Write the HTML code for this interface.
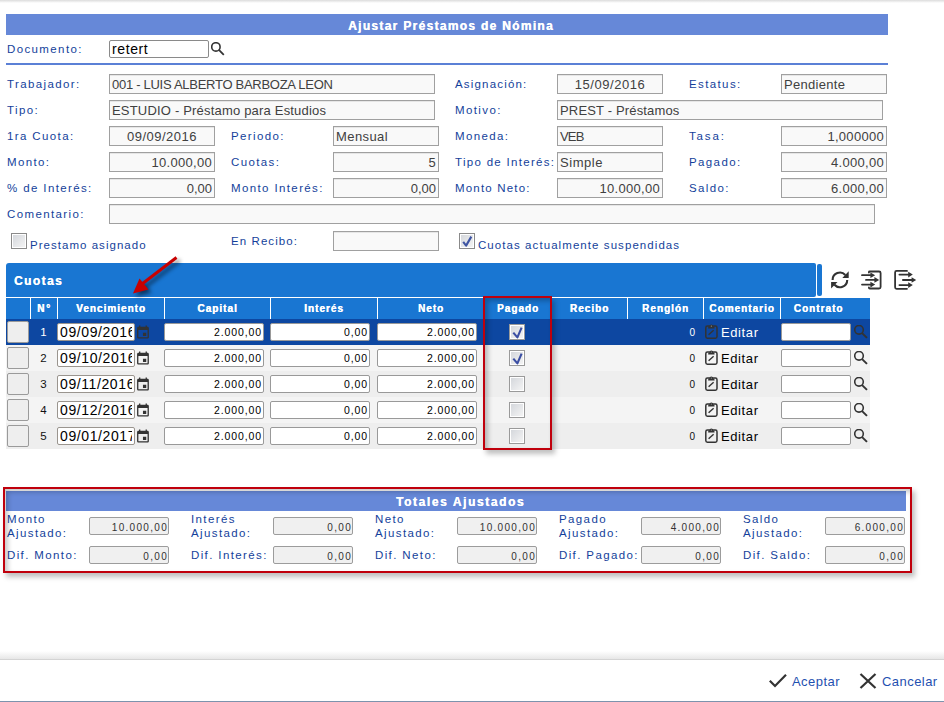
<!DOCTYPE html>
<html><head><meta charset="utf-8">
<style>
*{box-sizing:border-box;margin:0;padding:0}
html,body{width:944px;height:702px;overflow:hidden;background:#fff;font-family:"Liberation Sans",sans-serif}
.a{position:absolute}
.topsh{left:0;top:0;width:944px;height:3px;background:linear-gradient(#dcdcdc,#fff)}
.hbar{background:#6688d8;color:#fff;font-weight:bold;font-size:12px;text-align:center;letter-spacing:1.3px;padding-left:8px;text-shadow:0.3px 0 0 #fff}
.lbl{color:#143f9b;font-size:11.5px;letter-spacing:1.38px;white-space:nowrap;line-height:14px;margin-top:-1px}
.inp{height:20px;border:1px solid #a0a0a0;background:#f9f9f9;color:#404040;font-size:13px;line-height:19px;padding:0 2px;letter-spacing:0.3px;white-space:nowrap;overflow:hidden;box-shadow:inset 0 1px 0 #e6e6e6}
.r{text-align:right}
.c{text-align:center}
.th{height:21px;line-height:21px;color:#fff;font-weight:bold;font-size:10px;letter-spacing:1px;text-align:center;white-space:nowrap;text-shadow:0.35px 0 0 #fff}
.rsel{width:22px;height:22px;border:1px solid #9a9a9a;border-radius:2px;background:#eee}
.num{font-size:11.5px;line-height:12px;text-align:center}
.rg{font-size:10px;line-height:12px;text-align:right}
.dinp{width:78px;height:18px;border:1px solid #9a958f;border-radius:2px;background:#fff;color:#000;font-size:14px;line-height:16px;padding-left:2px;white-space:nowrap;overflow:hidden;letter-spacing:0.6px}
.dinp span{display:block;width:72px;overflow:hidden}
.tinp{height:18px;border:1px solid #999;border-radius:2px;background:#fff;color:#000;font-size:10.5px;line-height:17px;padding-right:1px;text-align:right;letter-spacing:0.9px;white-space:nowrap}
.chk{width:16px;height:16px;border:1px solid #9a9a9a;background:linear-gradient(135deg,#d2d5da,#f6f6f6);box-shadow:inset 0 0 0 1px #fff;padding:0}
.chk svg{position:absolute;left:0;top:0}
.edt{font-size:13px;line-height:16px;letter-spacing:0.6px}
.cinp{width:70px;height:18px;border:1px solid #999;border-radius:2px;background:#fff}
.redbox{border:2px solid #c0000c;z-index:5;box-shadow:3px 4px 5px rgba(0,0,0,.25), inset 3px 3px 5px rgba(0,0,0,.25)}
.redbox2{border:2px solid #c0000c;z-index:5;box-shadow:3px 4px 5px rgba(0,0,0,.25), inset 3px 3px 5px rgba(0,0,0,.22)}
.ginp{width:80px;height:18px;border:1px solid #9c9c9c;border-radius:2px;background:#f0f0f0;color:#333;font-size:10px;line-height:18px;text-align:right;padding:1px 0 0 0;letter-spacing:1.3px;white-space:nowrap}
.cb{width:16px;height:16px;border:1px solid #8a8a8a;background:linear-gradient(135deg,#d2d5da,#f6f6f6);box-shadow:inset 0 0 0 1px #fff}
.btn{color:#1f50b0;font-size:13px;line-height:16px;white-space:nowrap;letter-spacing:0.45px}
</style></head><body>
<div class="a topsh"></div>
<div class="a hbar" style="left:6px;top:14px;width:882px;height:21px;line-height:24px">Ajustar Préstamos de Nómina</div>

<div class="a lbl" style="left:7px;top:43px">Documento:</div>
<div class="a" style="left:109px;top:40px;width:100px;height:18px;border:1px solid #8a8a8a;border-radius:2px;background:#fff;font-size:14px;line-height:16px;padding-left:2px;color:#000;letter-spacing:0.6px">retert</div>
<svg class="a" style="left:211px;top:42px" width="15" height="15" viewBox="0 0 15 15"><circle cx="4.9" cy="4.9" r="4.2" fill="none" stroke="#333" stroke-width="1.6"/><path d="M7.9 7.9 L12.8 12.8" stroke="#333" stroke-width="1.8"/></svg>
<div class="a" style="left:6px;top:63px;width:882px;height:2px;background:#5b80d6"></div>

<!-- row 1 -->
<div class="a lbl" style="left:7px;top:78px">Trabajador:</div>
<div class="a inp" style="left:109px;top:74px;width:326px;letter-spacing:-0.28px">001 - LUIS ALBERTO BARBOZA LEON</div>
<div class="a lbl" style="left:455px;top:78px;letter-spacing:1.18px">Asignación:</div>
<div class="a inp c" style="left:557px;top:74px;width:106px;letter-spacing:0.55px">15/09/2016</div>
<div class="a lbl" style="left:689px;top:78px">Estatus:</div>
<div class="a inp" style="left:781px;top:74px;width:106px">Pendiente</div>
<!-- row 2 -->
<div class="a lbl" style="left:7px;top:104px">Tipo:</div>
<div class="a inp" style="left:109px;top:100px;width:326px;letter-spacing:0.19px">ESTUDIO - Préstamo para Estudios</div>
<div class="a lbl" style="left:455px;top:104px">Motivo:</div>
<div class="a inp" style="left:557px;top:100px;width:326px;letter-spacing:0.16px">PREST - Préstamos</div>
<!-- row 3 -->
<div class="a lbl" style="left:7px;top:130px">1ra Cuota:</div>
<div class="a inp c" style="left:109px;top:126px;width:106px;letter-spacing:0.5px">09/09/2016</div>
<div class="a lbl" style="left:231px;top:130px">Periodo:</div>
<div class="a inp" style="left:333px;top:126px;width:106px;letter-spacing:0.42px">Mensual</div>
<div class="a lbl" style="left:455px;top:130px">Moneda:</div>
<div class="a inp" style="left:557px;top:126px;width:106px;letter-spacing:-0.8px">VEB</div>
<div class="a lbl" style="left:689px;top:130px;letter-spacing:1.85px">Tasa:</div>
<div class="a inp r" style="left:781px;top:126px;width:106px">1,000000</div>
<!-- row 4 -->
<div class="a lbl" style="left:7px;top:156px">Monto:</div>
<div class="a inp r" style="left:109px;top:152px;width:106px">10.000,00</div>
<div class="a lbl" style="left:231px;top:156px">Cuotas:</div>
<div class="a inp r" style="left:333px;top:152px;width:106px">5</div>
<div class="a lbl" style="left:455px;top:156px;letter-spacing:1.3px">Tipo de Interés:</div>
<div class="a inp" style="left:557px;top:152px;width:106px;letter-spacing:0.54px">Simple</div>
<div class="a lbl" style="left:689px;top:156px">Pagado:</div>
<div class="a inp r" style="left:781px;top:152px;width:106px">4.000,00</div>
<!-- row 5 -->
<div class="a lbl" style="left:7px;top:182px">% de Interés:</div>
<div class="a inp r" style="left:109px;top:178px;width:106px;letter-spacing:0px">0,00</div>
<div class="a lbl" style="left:231px;top:182px">Monto Interés:</div>
<div class="a inp r" style="left:333px;top:178px;width:106px;letter-spacing:0px">0,00</div>
<div class="a lbl" style="left:455px;top:182px;letter-spacing:1.18px">Monto Neto:</div>
<div class="a inp r" style="left:557px;top:178px;width:106px">10.000,00</div>
<div class="a lbl" style="left:689px;top:182px">Saldo:</div>
<div class="a inp r" style="left:781px;top:178px;width:106px">6.000,00</div>
<!-- row 6 -->
<div class="a lbl" style="left:7px;top:208px">Comentario:</div>
<div class="a inp" style="left:109px;top:204px;width:766px"></div>
<!-- row 7 -->
<div class="a cb" style="left:11px;top:233px"></div>
<div class="a lbl" style="left:30px;top:239px;letter-spacing:1.03px">Prestamo asignado</div>
<div class="a lbl" style="left:231px;top:235px;letter-spacing:1.08px">En Recibo:</div>
<div class="a inp" style="left:333px;top:231px;width:106px"></div>
<div class="a cb" style="left:459px;top:233px"><svg width="14" height="14" viewBox="0 0 14 14" style="position:absolute;left:0;top:0"><path d="M3.2 7.9 L6.1 11.6 L11.3 2.6" fill="none" stroke="#3f55a3" stroke-width="2.1" stroke-linejoin="round"/></svg></div>
<div class="a lbl" style="left:478px;top:239px;letter-spacing:1.07px">Cuotas actualmente suspendidas</div>

<svg width="0" height="0" style="position:absolute"><defs>
<g id="cal"><path d="M1 3 Q1 2 2 2 H10 Q11 2 11 3 V12 Q11 13 10 13 H2 Q1 13 1 12 Z" fill="none" stroke="#333" stroke-width="1.6"/><rect x="1" y="2" width="10" height="3" fill="#333"/><rect x="3" y="0.5" width="1.5" height="2.5" fill="#333"/><rect x="7.5" y="0.5" width="1.5" height="2.5" fill="#333"/><rect x="6.5" y="8" width="3" height="3" fill="#333"/></g>
<g id="clip"><rect x="0.8" y="2.1" width="11.2" height="12.1" rx="1.6" fill="none" stroke="#333" stroke-width="1.5"/><path d="M3.1 4.4 L3.4 2.4 H4.5 A1.85 1.85 0 0 1 8.2 2.4 H9.3 L9.6 4.4 Z" fill="#333"/><circle cx="6.35" cy="2.1" r="0.6" fill="#9a9a9a"/><path d="M3.6 10.8 L8.6 6.2" stroke="#333" stroke-width="1.4"/></g>
<g id="srch"><circle cx="5" cy="4.8" r="4.3" fill="none" stroke="#333" stroke-width="1.6"/><path d="M8.1 8.1 L13 12.9" stroke="#333" stroke-width="2"/></g>
</defs></svg>
<!-- cuotas -->
<div class="a" style="left:6px;top:263px;width:810px;height:34px;background:#1976d2;border-radius:3px 2px 2px 0"></div>
<div class="a" style="left:14px;top:274px;color:#fff;font-weight:bold;font-size:12px;letter-spacing:1.4px;line-height:14px;text-shadow:0.3px 0 0 #fff">Cuotas</div>
<div class="a" style="left:817px;top:264px;width:5px;height:32px;background:#1976d2;border-radius:2px"></div>
<div class="a" style="left:6px;top:298px;width:864px;height:21px;background:#1976d2"></div>
<div class="a" style="left:30px;top:298px;width:1px;height:21px;background:#fff"></div>
<div class="a" style="left:57px;top:298px;width:1px;height:21px;background:#fff"></div>
<div class="a" style="left:164px;top:298px;width:1px;height:21px;background:#fff"></div>
<div class="a" style="left:270px;top:298px;width:1px;height:21px;background:#fff"></div>
<div class="a" style="left:377px;top:298px;width:1px;height:21px;background:#fff"></div>
<div class="a" style="left:484px;top:298px;width:1px;height:21px;background:#fff"></div>
<div class="a" style="left:551px;top:298px;width:1px;height:21px;background:#fff"></div>
<div class="a" style="left:627px;top:298px;width:1px;height:21px;background:#fff"></div>
<div class="a" style="left:703px;top:298px;width:1px;height:21px;background:#fff"></div>
<div class="a" style="left:780px;top:298px;width:1px;height:21px;background:#fff"></div>
<div class="a th" style="left:31px;top:298px;width:26px;letter-spacing:1.8px;padding-left:1px">N°</div>
<div class="a th" style="left:58px;top:298px;width:106px">Vencimiento</div>
<div class="a th" style="left:165px;top:298px;width:105px">Capital</div>
<div class="a th" style="left:271px;top:298px;width:106px">Interés</div>
<div class="a th" style="left:378px;top:298px;width:106px">Neto</div>
<div class="a th" style="left:485px;top:298px;width:66px">Pagado</div>
<div class="a th" style="left:552px;top:298px;width:75px">Recibo</div>
<div class="a th" style="left:628px;top:298px;width:75px">Renglón</div>
<div class="a th" style="left:704px;top:298px;width:76px">Comentario</div>
<div class="a th" style="left:781px;top:298px;width:75px">Contrato</div>
<div class="a" style="left:6px;top:319px;width:864px;height:26px;background:#0d47a1"></div>
<div class="a rsel" style="left:7px;top:321px"></div>
<div class="a num" style="left:30px;top:326px;width:27px;color:#fff">1</div>
<div class="a dinp" style="left:57px;top:323px"><span>09/09/2016</span></div>
<svg class="a" style="left:135px;top:324px" width="16" height="16" viewBox="-0.15 -1.3 24.4 24.4"><path d="M17 12h-5v5h5v-5zM16 1v2H8V1H6v2H5c-1.11 0-1.99.9-1.99 2L3 19a2 2 0 0 0 2 2h14c1.1 0 2-.9 2-2V5c0-1.1-.9-2-2-2h-1V1h-2zm3 18H5V8h14v11z" fill="#333"/></svg>
<div class="a tinp" style="left:164px;top:323px;width:100px">2.000,00</div>
<div class="a tinp" style="left:270px;top:323px;width:100px">0,00</div>
<div class="a tinp" style="left:377px;top:323px;width:100px">2.000,00</div>
<div class="a chk" style="left:509px;top:324px"><svg width="14" height="14" viewBox="0 0 14 14"><path d="M3.3 7.6 L7.4 12.4 L11.6 2.6" fill="none" stroke="#3b4ea3" stroke-width="2.1" stroke-linejoin="round"/></svg></div>
<div class="a rg" style="left:660px;top:327px;width:35px;color:#fff">0</div>
<svg class="a" style="left:705px;top:324px" width="13" height="15" viewBox="0 0 13 15"><use href="#clip"/></svg>
<div class="a edt" style="left:721px;top:325px;color:#fff">Editar</div>
<div class="a cinp" style="left:781px;top:323px"></div>
<svg class="a" style="left:854px;top:325px" width="14" height="14" viewBox="0 0 14 14"><use href="#srch"/></svg>
<div class="a" style="left:6px;top:345px;width:864px;height:26px;background:#f4f4f4"></div>
<div class="a rsel" style="left:7px;top:347px"></div>
<div class="a num" style="left:30px;top:352px;width:27px;color:#111">2</div>
<div class="a dinp" style="left:57px;top:349px"><span>09/10/2016</span></div>
<svg class="a" style="left:135px;top:350px" width="16" height="16" viewBox="-0.15 -1.3 24.4 24.4"><path d="M17 12h-5v5h5v-5zM16 1v2H8V1H6v2H5c-1.11 0-1.99.9-1.99 2L3 19a2 2 0 0 0 2 2h14c1.1 0 2-.9 2-2V5c0-1.1-.9-2-2-2h-1V1h-2zm3 18H5V8h14v11z" fill="#333"/></svg>
<div class="a tinp" style="left:164px;top:349px;width:100px">2.000,00</div>
<div class="a tinp" style="left:270px;top:349px;width:100px">0,00</div>
<div class="a tinp" style="left:377px;top:349px;width:100px">2.000,00</div>
<div class="a chk" style="left:509px;top:350px"><svg width="14" height="14" viewBox="0 0 14 14"><path d="M3.3 7.6 L7.4 12.4 L11.6 2.6" fill="none" stroke="#3b4ea3" stroke-width="2.1" stroke-linejoin="round"/></svg></div>
<div class="a rg" style="left:660px;top:353px;width:35px;color:#111">0</div>
<svg class="a" style="left:705px;top:350px" width="13" height="15" viewBox="0 0 13 15"><use href="#clip"/></svg>
<div class="a edt" style="left:721px;top:351px;color:#000">Editar</div>
<div class="a cinp" style="left:781px;top:349px"></div>
<svg class="a" style="left:854px;top:351px" width="14" height="14" viewBox="0 0 14 14"><use href="#srch"/></svg>
<div class="a" style="left:6px;top:371px;width:864px;height:26px;background:#eeeeee"></div>
<div class="a rsel" style="left:7px;top:373px"></div>
<div class="a num" style="left:30px;top:378px;width:27px;color:#111">3</div>
<div class="a dinp" style="left:57px;top:375px"><span>09/11/2016</span></div>
<svg class="a" style="left:135px;top:376px" width="16" height="16" viewBox="-0.15 -1.3 24.4 24.4"><path d="M17 12h-5v5h5v-5zM16 1v2H8V1H6v2H5c-1.11 0-1.99.9-1.99 2L3 19a2 2 0 0 0 2 2h14c1.1 0 2-.9 2-2V5c0-1.1-.9-2-2-2h-1V1h-2zm3 18H5V8h14v11z" fill="#333"/></svg>
<div class="a tinp" style="left:164px;top:375px;width:100px">2.000,00</div>
<div class="a tinp" style="left:270px;top:375px;width:100px">0,00</div>
<div class="a tinp" style="left:377px;top:375px;width:100px">2.000,00</div>
<div class="a chk" style="left:509px;top:376px"></div>
<div class="a rg" style="left:660px;top:379px;width:35px;color:#111">0</div>
<svg class="a" style="left:705px;top:376px" width="13" height="15" viewBox="0 0 13 15"><use href="#clip"/></svg>
<div class="a edt" style="left:721px;top:377px;color:#000">Editar</div>
<div class="a cinp" style="left:781px;top:375px"></div>
<svg class="a" style="left:854px;top:377px" width="14" height="14" viewBox="0 0 14 14"><use href="#srch"/></svg>
<div class="a" style="left:6px;top:397px;width:864px;height:26px;background:#f4f4f4"></div>
<div class="a rsel" style="left:7px;top:399px"></div>
<div class="a num" style="left:30px;top:404px;width:27px;color:#111">4</div>
<div class="a dinp" style="left:57px;top:401px"><span>09/12/2016</span></div>
<svg class="a" style="left:135px;top:402px" width="16" height="16" viewBox="-0.15 -1.3 24.4 24.4"><path d="M17 12h-5v5h5v-5zM16 1v2H8V1H6v2H5c-1.11 0-1.99.9-1.99 2L3 19a2 2 0 0 0 2 2h14c1.1 0 2-.9 2-2V5c0-1.1-.9-2-2-2h-1V1h-2zm3 18H5V8h14v11z" fill="#333"/></svg>
<div class="a tinp" style="left:164px;top:401px;width:100px">2.000,00</div>
<div class="a tinp" style="left:270px;top:401px;width:100px">0,00</div>
<div class="a tinp" style="left:377px;top:401px;width:100px">2.000,00</div>
<div class="a chk" style="left:509px;top:402px"></div>
<div class="a rg" style="left:660px;top:405px;width:35px;color:#111">0</div>
<svg class="a" style="left:705px;top:402px" width="13" height="15" viewBox="0 0 13 15"><use href="#clip"/></svg>
<div class="a edt" style="left:721px;top:403px;color:#000">Editar</div>
<div class="a cinp" style="left:781px;top:401px"></div>
<svg class="a" style="left:854px;top:403px" width="14" height="14" viewBox="0 0 14 14"><use href="#srch"/></svg>
<div class="a" style="left:6px;top:423px;width:864px;height:26px;background:#eeeeee"></div>
<div class="a rsel" style="left:7px;top:425px"></div>
<div class="a num" style="left:30px;top:430px;width:27px;color:#111">5</div>
<div class="a dinp" style="left:57px;top:427px"><span>09/01/2017</span></div>
<svg class="a" style="left:135px;top:428px" width="16" height="16" viewBox="-0.15 -1.3 24.4 24.4"><path d="M17 12h-5v5h5v-5zM16 1v2H8V1H6v2H5c-1.11 0-1.99.9-1.99 2L3 19a2 2 0 0 0 2 2h14c1.1 0 2-.9 2-2V5c0-1.1-.9-2-2-2h-1V1h-2zm3 18H5V8h14v11z" fill="#333"/></svg>
<div class="a tinp" style="left:164px;top:427px;width:100px">2.000,00</div>
<div class="a tinp" style="left:270px;top:427px;width:100px">0,00</div>
<div class="a tinp" style="left:377px;top:427px;width:100px">2.000,00</div>
<div class="a chk" style="left:509px;top:428px"></div>
<div class="a rg" style="left:660px;top:431px;width:35px;color:#111">0</div>
<svg class="a" style="left:705px;top:428px" width="13" height="15" viewBox="0 0 13 15"><use href="#clip"/></svg>
<div class="a edt" style="left:721px;top:429px;color:#000">Editar</div>
<div class="a cinp" style="left:781px;top:427px"></div>
<svg class="a" style="left:854px;top:429px" width="14" height="14" viewBox="0 0 14 14"><use href="#srch"/></svg>
<!-- annotations -->
<div class="a redbox" style="left:483px;top:296px;width:69px;height:154px"></div>
<svg class="a" style="left:120px;top:250px" width="70" height="55" viewBox="120 250 70 55">
<defs><filter id="sh" x="-50%" y="-50%" width="200%" height="200%"><feGaussianBlur stdDeviation="2"/></filter></defs>
<g transform="translate(3,3)" opacity="0.55" filter="url(#sh)"><path d="M176.5 257.5 L142 284" stroke="#000" stroke-width="3"/><path d="M133 293.5 L139.5 278.5 L148.5 289.5 Z" fill="#000"/></g>
<path d="M176.5 257.5 L142 284" stroke="#c80000" stroke-width="3"/><path d="M133 293.5 L139.5 278.5 L148.5 289.5 Z" fill="#c80000"/>
</svg>
<svg class="a" style="left:826px;top:266px" width="26" height="26" viewBox="826 266 26 26"><g fill="none" stroke="#333" stroke-width="2.1"><path d="M832.60 279.90 A7.3 7.3 0 0 1 845.32 275.02"/><path d="M847.20 279.90 A7.3 7.3 0 0 1 834.48 284.78"/></g><path d="M848.7 271.3 V277.9 H842.3 Z M831.1 288.6 V282 H837.5 Z" fill="#333"/></svg>
<svg class="a" style="left:858px;top:266px" width="28" height="26" viewBox="858 266 28 26"><g fill="none" stroke="#333" stroke-width="1.8" stroke-linecap="round"><path d="M868.9 272.5 V272 Q868.9 271.5 869.8 271.5 H879 Q880.6 271.5 880.6 273 V287 Q880.6 288.5 879 288.5 H869.8 Q868.9 288.5 868.9 287.8 V287.5"/><path d="M862 275.2 H871.5 M866 279.9 H875.5 M862 284.6 H871.5"/></g><path d="M870.4 272.4 L875.2 275.2 L870.4 278 Z M874.4 277.1 L879.2 279.9 L874.4 282.7 Z M870.4 281.8 L875.2 284.6 L870.4 287.4 Z" fill="#333"/></svg>
<svg class="a" style="left:890px;top:266px" width="30" height="26" viewBox="890 266 30 26"><g fill="none" stroke="#333" stroke-width="1.8" stroke-linecap="round"><path d="M907 270.9 H896.6 Q895.1 270.9 895.1 272.4 V287.3 Q895.1 288.8 896.6 288.8 H907"/><path d="M899.4 274.6 H909.5 M902.9 280 H913 M899.4 285.1 H909.5"/></g><path d="M908.2 271.8 L912.8 274.6 L908.2 277.4 Z M911.6 277.2 L916.2 280 L911.6 282.8 Z M908.2 282.3 L912.8 285.1 L908.2 287.9 Z" fill="#333"/></svg>
<div class="a redbox2" style="left:3px;top:487px;width:909px;height:86px"></div>
<div class="a hbar" style="left:6px;top:491px;width:900px;height:20px;line-height:22px;letter-spacing:1.6px;padding-left:9px">Totales Ajustados</div>
<div class="a lbl" style="left:7px;top:513px;line-height:14px">Monto<br>Ajustado:</div>
<div class="a ginp" style="left:89px;top:517px">10.000,00</div>
<div class="a lbl" style="left:7px;top:549px">Dif. Monto:</div>
<div class="a ginp" style="left:89px;top:546px">0,00</div>
<div class="a lbl" style="left:191px;top:513px;line-height:14px">Interés<br>Ajustado:</div>
<div class="a ginp" style="left:273px;top:517px">0,00</div>
<div class="a lbl" style="left:191px;top:549px">Dif. Interés:</div>
<div class="a ginp" style="left:273px;top:546px">0,00</div>
<div class="a lbl" style="left:375px;top:513px;line-height:14px">Neto<br>Ajustado:</div>
<div class="a ginp" style="left:457px;top:517px">10.000,00</div>
<div class="a lbl" style="left:375px;top:549px">Dif. Neto:</div>
<div class="a ginp" style="left:457px;top:546px">0,00</div>
<div class="a lbl" style="left:559px;top:513px;line-height:14px">Pagado<br>Ajustado:</div>
<div class="a ginp" style="left:641px;top:517px">4.000,00</div>
<div class="a lbl" style="left:559px;top:549px">Dif. Pagado:</div>
<div class="a ginp" style="left:641px;top:546px">0,00</div>
<div class="a lbl" style="left:743px;top:513px;line-height:14px">Saldo<br>Ajustado:</div>
<div class="a ginp" style="left:825px;top:517px">6.000,00</div>
<div class="a lbl" style="left:743px;top:549px">Dif. Saldo:</div>
<div class="a ginp" style="left:825px;top:546px">0,00</div>
<div class="a" style="left:0;top:651px;width:944px;height:9px;background:linear-gradient(#fff,#e4e4e4)"></div>
<div class="a" style="left:0;top:659px;width:944px;height:1px;background:#d4d4d4"></div>
<div class="a" style="left:0;top:701px;width:944px;height:1px;background:#7d93ad"></div>
<svg class="a" style="left:768px;top:673px" width="20" height="16" viewBox="768 673 20 16"><path d="M769.8 680.8 L775 686 L786 674.8" fill="none" stroke="#333" stroke-width="2.2"/></svg>
<div class="a btn" style="left:792px;top:674px">Aceptar</div>
<svg class="a" style="left:859px;top:673px" width="18" height="16" viewBox="859 673 18 16"><path d="M860.5 674 L875.5 688 M875.5 674 L860.5 688" fill="none" stroke="#333" stroke-width="2.2"/></svg>
<div class="a btn" style="left:882px;top:674px">Cancelar</div>
</body></html>
